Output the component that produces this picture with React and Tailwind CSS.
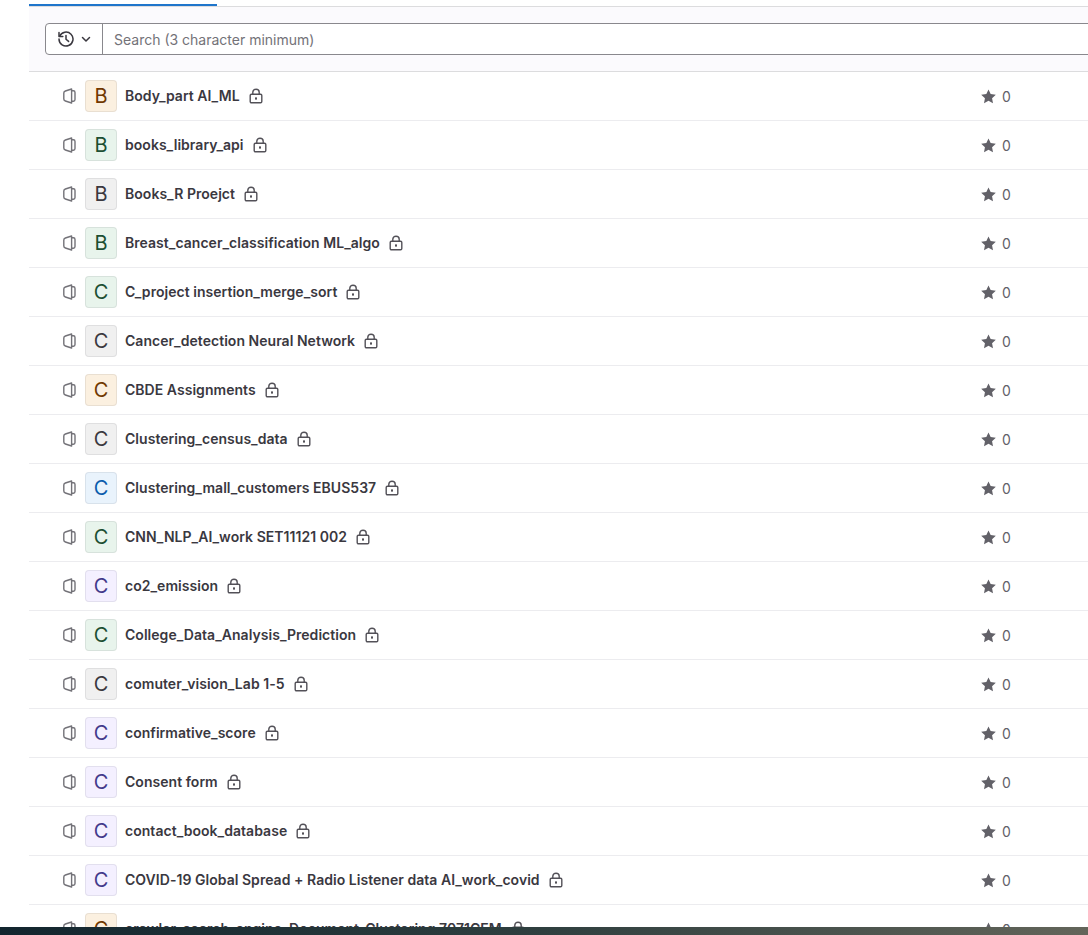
import React from 'react';

const projects = [
  { name: 'Body_part AI_ML', letter: 'B', tone: 'orange' },
  { name: 'books_library_api', letter: 'B', tone: 'green' },
  { name: 'Books_R Proejct', letter: 'B', tone: 'gray' },
  { name: 'Breast_cancer_classification ML_algo', letter: 'B', tone: 'green' },
  { name: 'C_project insertion_merge_sort', letter: 'C', tone: 'green' },
  { name: 'Cancer_detection Neural Network', letter: 'C', tone: 'gray' },
  { name: 'CBDE Assignments', letter: 'C', tone: 'orange' },
  { name: 'Clustering_census_data', letter: 'C', tone: 'gray' },
  { name: 'Clustering_mall_customers EBUS537', letter: 'C', tone: 'blue' },
  { name: 'CNN_NLP_AI_work SET11121 002', letter: 'C', tone: 'green' },
  { name: 'co2_emission', letter: 'C', tone: 'purple' },
  { name: 'College_Data_Analysis_Prediction', letter: 'C', tone: 'green' },
  { name: 'comuter_vision_Lab 1-5', letter: 'C', tone: 'gray' },
  { name: 'confirmative_score', letter: 'C', tone: 'purple' },
  { name: 'Consent form', letter: 'C', tone: 'purple' },
  { name: 'contact_book_database', letter: 'C', tone: 'purple' },
  { name: 'COVID-19 Global Spread + Radio Listener data AI_work_covid', letter: 'C', tone: 'purple' },
  { name: 'crawler_search_engine_Document_Clustering 7071CEM', letter: 'C', tone: 'orange' },
];

const tones = {
  orange: 'bg-[#fbf0e0] text-[#703800]',
  green: 'bg-[#e8f4ec] text-[#1c4f33]',
  gray: 'bg-[#f0f0f0] text-[#3a383f]',
  blue: 'bg-[#e9f3fc] text-[#0b5cad]',
  purple: 'bg-[#f4f0ff] text-[#433a8b]',
};

const BookIcon = () => (
  <svg width="13" height="16" viewBox="0 0 13 16" fill="none" stroke="#737278" strokeWidth="1.4" strokeLinejoin="round" className="shrink-0 ml-px">
    <path d="M8.6 1 L2.4 3 C1.4 3.3 .8 4 .8 5 V11 C.8 12 1.4 12.7 2.4 13 L8.6 15 Z" />
    <path d="M8.6 2.8 H10.4 C11.4 2.8 12 3.6 12 4.4 V11.6 C12 12.4 11.4 13.2 10.4 13.2 H8.6" />
  </svg>
);

const LockIcon = () => (
  <svg width="14" height="16" viewBox="0 0 14 16" fill="none" stroke="#535158" strokeWidth="1.4" className="shrink-0">
    <rect x="1.2" y="6.2" width="11.6" height="8.6" rx="1.2" />
    <path d="M3.8 6.2 V4.2 C3.8 2.4 5.2 1.2 7 1.2 C8.8 1.2 10.2 2.4 10.2 4.2 V6.2" />
    <rect x="6" y="9.4" width="2" height="2.2" fill="#535158" stroke="none" />
  </svg>
);

const StarIcon = () => (
  <svg width="15" height="15" viewBox="0 0 16 16" fill="#626168" className="shrink-0">
    <path d="M8 .4 10.3 5.3 15.8 6 11.8 9.8 12.8 15.2 8 12.6 3.2 15.2 4.2 9.8 .2 6 5.7 5.3Z" />
  </svg>
);

const HistoryIcon = () => (
  <svg width="16" height="16" viewBox="0 0 16 16" fill="none" stroke="#3a383f" strokeWidth="1.5" strokeLinecap="round" strokeLinejoin="round">
    <path d="M1.6 5.2 A7 7 0 1 1 1 8" />
    <path d="M1 1.6 V5.4 H4.8" />
    <path d="M8 4.4 V8.2 L10.6 10.4" />
  </svg>
);

const Chevron = () => (
  <svg width="10" height="10" viewBox="0 0 10 10" fill="none" stroke="#3a383f" strokeWidth="1.5" strokeLinecap="round" strokeLinejoin="round">
    <path d="M1.5 3.5 5 7 8.5 3.5" />
  </svg>
);

const Row = ({ project }) => (
  <div className="flex h-[49px] shrink-0 items-center border-b border-[#ececef] pl-[33px]">
    <BookIcon />
    <div className={`ml-[9px] flex h-8 w-8 shrink-0 items-center justify-center rounded-[4px] shadow-[inset_0_0_0_1px_rgba(31,30,36,0.08)] text-[20px] leading-none ${tones[project.tone]}`}>
      {project.letter}
    </div>
    <span className="ml-2 whitespace-nowrap text-[14px] font-semibold tracking-[0.035px] text-[#3a383f] mb-px">{project.name}</span>
    <span className="ml-[9px] flex"><LockIcon /></span>
    <div className="ml-auto flex w-[107px] shrink-0 items-center text-[14px] text-[#626168]">
      <StarIcon />
      <span className="ml-[6px]">0</span>
    </div>
  </div>
);

export default function App() {
  return (
    <div className="relative h-[935px] w-[1088px] overflow-hidden bg-white font-['Inter',sans-serif]">
      <div className="ml-[29px]">
        <div className="h-[7px] border-b border-[#dcdcde] pt-1">
          <div className="h-0.5 w-[188px] bg-[#1f75cb]" />
        </div>
        <div className="flex h-[65px] items-start overflow-hidden border-b border-[#dcdcde] bg-[#fbfafd] pl-4 pt-4">
          <div className="flex h-8 w-[1100px] shrink-0 rounded-l-[4px] border border-[#89888d] bg-white">
            <div className="flex w-[57px] shrink-0 items-center justify-center gap-[7px] border-r border-[#89888d]">
              <HistoryIcon />
              <Chevron />
            </div>
            <div className="flex items-center pl-[11px] text-[14px] text-[#737278]">Search (3 character minimum)</div>
          </div>
        </div>
        <div className="flex flex-col">
          {projects.map((p) => (
            <Row key={p.name} project={p} />
          ))}
        </div>
      </div>
      {/* dock edge of the captured desktop */}
      <div className="absolute bottom-0 left-0 h-2 w-full bg-gradient-to-r from-[#12252e] via-[#2f3f3f] to-[#63655a]" />
    </div>
  );
}
